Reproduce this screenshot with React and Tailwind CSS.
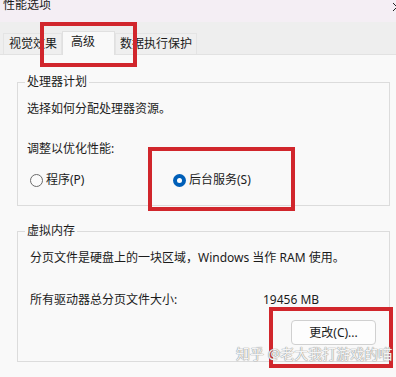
import React from 'react';

const Radio = ({ checked }) =>
  checked ? (
    <span className="w-[13px] h-[13px] rounded-full bg-[#005fb8] flex items-center justify-center shrink-0">
      <span className="w-[5px] h-[5px] rounded-full bg-white" />
    </span>
  ) : (
    <span className="w-[13px] h-[13px] rounded-full border border-[#6b6b6b] bg-[#fbfbfb] shrink-0" />
  );

const Group = ({ title, className = '', children }) => (
  <fieldset className={`ml-[17px] w-[373px] border border-[#dcdcdc] ${className}`}>
    <legend className="ml-[7px] px-[2px] text-[12px] leading-[16px]">{title}</legend>
    {children}
  </fieldset>
);

const RedBox = ({ className }) => (
  <div className={`absolute border-[4px] border-[#d1262c] pointer-events-none ${className}`} />
);

export default function App() {
  return (
    <div className="relative w-[396px] h-[377px] overflow-hidden bg-[#f9f9f9] text-[#1b1b1b] text-[12px] [font-family:'Noto_Sans','Noto_Sans_CJK_SC',sans-serif]">
      {/* title bar */}
      <div className="h-[22px] bg-[#f4eef4] flex items-start justify-between">
        <span className="ml-[3px] mt-[-3px] leading-[16px]">性能选项</span>
        <svg className="mt-[2px] mr-[-6px]" width="10" height="10" viewBox="0 0 10 10">
          <path d="M1 1L9 9M9 1L1 9" stroke="#222" strokeWidth="1" fill="none" />
        </svg>
      </div>

      {/* tabs */}
      <div className="h-[33px] bg-[#eeeeee] border-b border-[#e2e2e2] flex items-end pl-[3px]">
        <div className="h-[21px] pl-[5px] pr-[4px] flex items-center leading-[16px] bg-[#efefef] border-t border-x border-[#e4e4e4]">
          视觉效果
        </div>
        <div className="h-[24px] mb-[-1px] w-[53px] pl-[8px] pb-[3px] flex items-center leading-[16px] bg-[#f9f9f9] border-t border-x border-[#e0e0e0]">
          高级
        </div>
        <div className="h-[21px] px-[4px] flex items-center leading-[16px] bg-[#efefef] border-t border-x border-[#e4e4e4]">
          数据执行保护
        </div>
      </div>

      {/* processor scheduling */}
      <Group title="处理器计划" className="mt-[19px] pb-[17px]">
        <div className="pl-[9px] mt-[11px] leading-[16px]">选择如何分配处理器资源。</div>
        <div className="pl-[9px] mt-[24px] leading-[16px]">调整以优化性能:</div>
        <div className="mt-[15px] flex items-center leading-[16px] pl-[12px]">
          <div className="w-[143px] flex items-center gap-[3px]">
            <Radio />
            <span>程序(P)</span>
          </div>
          <div className="flex items-center gap-[3px]">
            <Radio checked />
            <span>后台服务(S)</span>
          </div>
        </div>
      </Group>

      {/* virtual memory */}
      <Group title="虚拟内存" className="mt-[17px] pb-[16px]">
        <div className="pl-[12px] mt-[11px] leading-[16px]">分页文件是硬盘上的一块区域，Windows 当作 RAM 使用。</div>
        <div className="pl-[12px] mt-[26px] leading-[16px] flex">
          <span className="w-[233px]">所有驱动器总分页文件大小:</span>
          <span>19456 MB</span>
        </div>
        <div className="mt-[12px] flex justify-end pr-[13px]">
          <button className="w-[85px] h-[25px] bg-[#fdfdfd] border border-[#d0d0d0] rounded-[4px] leading-[16px] flex items-center justify-center">
            更改(C)...
          </button>
        </div>
      </Group>

      {/* annotations */}
      <RedBox className="left-[40px] top-[22px] w-[97px] h-[45px]" />
      <RedBox className="left-[148px] top-[147px] w-[147px] h-[64px]" />
      <RedBox className="left-[269px] top-[307px] w-[124px] h-[61px]" />

      {/* watermark */}
      <div className="absolute left-[236px] top-[345px] text-[14px] leading-[18px] text-[#f4f4f4] [text-shadow:0_0_1px_#8a8a8a,0_0_1px_#8a8a8a] whitespace-nowrap pointer-events-none">
        知乎 @老大我打游戏的喵
      </div>
    </div>
  );
}
